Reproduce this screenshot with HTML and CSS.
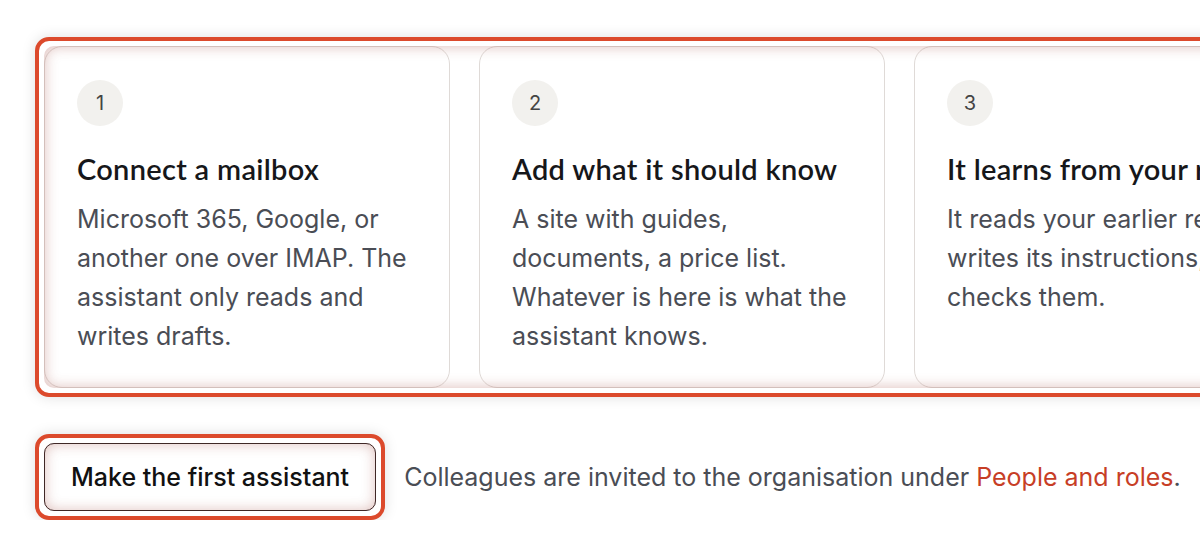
FILE: index.html
```html
<!DOCTYPE html>
<html lang="en">
<head>
  <meta charset="UTF-8">
  <title>Getting started</title>
  <link rel="stylesheet" href="styles.css">
</head>
<body>
  <div class="page">
    <div class="mark mark-steps">
      <div class="steps">
        <div class="step">
          <div class="step-num">1</div>
          <h3>Connect a mailbox</h3>
          <p>Microsoft 365, Google, or another one over IMAP. The assistant only reads and writes drafts.</p>
        </div>
        <div class="step">
          <div class="step-num">2</div>
          <h3>Add what it should know</h3>
          <p>A site with guides, documents, a price list. Whatever is here is what the assistant knows.</p>
        </div>
        <div class="step">
          <div class="step-num">3</div>
          <h3>It learns from your replies</h3>
          <p>It reads your earlier replies, writes its instructions, then checks them.</p>
        </div>
      </div>
    </div>

    <div class="actions">
      <div class="mark mark-btn">
        <button class="btn">Make the first assistant</button>
      </div>
      <p class="hint">Colleagues are invited to the organisation under <a href="#">People and roles</a>.</p>
    </div>
  </div>
</body>
</html>
```

FILE: styles.css
```css
html, body {
  margin: 0;
  background: #fff;
  overflow: hidden;
}
body {
  font-family: Inter, "Liberation Sans", sans-serif;
  color: #4a4d55;
}
.page {
  padding: 37px 0 0 35px;
  width: 1400px;
}

/* red highlight ring */
.mark {
  position: relative;
  border: 4px solid #dc4a2c;
  border-radius: 14px;
  padding: 5px;
  background: #fff;
  box-shadow: 0 0 14px rgba(0,0,0,0.13);
}
.mark::after {
  content: "";
  position: absolute;
  inset: 5px;
  border-radius: 10px;
  box-shadow: inset 0 0 14px rgba(160,70,60,0.38);
  pointer-events: none;
}
.mark-steps {
  width: 1300px;
}
.mark-btn {
  display: inline-block;
}

.steps {
  display: grid;
  grid-template-columns: 406px 406px 406px;
  gap: 29px;
}
.step {
  border: 1px solid #dfdad7;
  border-radius: 18px;
  padding: 33px 32px 32px 32px;
  height: 342px;
  box-sizing: border-box;
}
.step-num {
  width: 46px;
  height: 46px;
  border-radius: 50%;
  background: #f2f1ee;
  color: #444;
  font-size: 20px;
  display: flex;
  align-items: center;
  justify-content: center;
}
.step h3 {
  font-family: Lato, "Noto Sans", sans-serif;
  font-weight: 600;
  font-size: 29px;
  letter-spacing: 0.3px;
  line-height: 36px;
  color: #16171a;
  margin: 25px 0 13px;
  white-space: nowrap;
}
.step p {
  margin: 0;
  font-size: 25px;
  line-height: 39px;
}

.actions {
  display: flex;
  align-items: center;
  gap: 19px;
  margin-top: 37px;
}
.btn {
  display: block;
  font-family: Inter, "Liberation Sans", sans-serif;
  font-size: 25px;
  font-weight: 500;
  color: #111;
  background: #fff;
  border: 1.5px solid #2a2223;
  border-radius: 10px;
  height: 68px;
  padding: 0 26px;
}
.hint {
  margin: 0;
  font-size: 25px;
}
.hint a {
  color: #c73e26;
  text-decoration: none;
}
```
